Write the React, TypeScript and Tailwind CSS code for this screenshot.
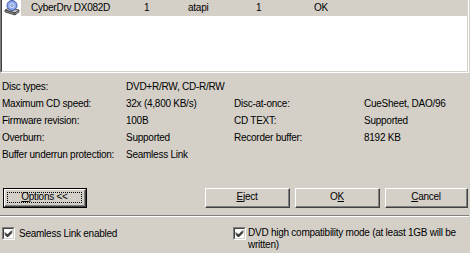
import React from "react";

function DriveIcon() {
  return (
    <svg width="16" height="16" viewBox="0 0 16 16" className="block">
      <path d="M1 10 L5 8 L15 10 L11 13 Z" fill="#c0c0c0" stroke="#404040" strokeWidth="0.8" />
      <path d="M1 10 L11 13 L11 15 L1 12 Z" fill="#808080" stroke="#404040" strokeWidth="0.8" />
      <path d="M11 13 L15 10 L15 12 L11 15 Z" fill="#a0a0a0" stroke="#404040" strokeWidth="0.8" />
      <circle cx="8" cy="5.5" r="5" fill="#8fa8e8" stroke="#3050a0" strokeWidth="0.9" />
      <circle cx="8" cy="5.5" r="2.6" fill="#c8d8ff" />
      <circle cx="8" cy="5.5" r="1" fill="#ffffff" stroke="#3050a0" strokeWidth="0.6" />
    </svg>
  );
}

function Check() {
  return (
    <span className="block shrink-0 w-[13px] h-[13px] border-t border-l border-[#808080] border-r border-b border-r-white border-b-white">
      <span className="block w-[11px] h-[11px] border-t border-l border-[#404040] border-r border-b border-r-[#d4d0c8] border-b-[#d4d0c8] bg-white">
        <svg width="9" height="9" viewBox="0 0 9 9" className="block">
          <path d="M1 3.5 L3.5 6 L8 1.5 M1 4.5 L3.5 7 L8 2.5 M1 5.5 L3.5 8 L8 3.5" stroke="#000" strokeWidth="1" fill="none" />
        </svg>
      </span>
    </span>
  );
}

function Btn({ children, focus = false, w = "w-[85px]" }: { children: React.ReactNode; focus?: boolean; w?: string }) {
  if (focus) {
    return (
      <div className={`${w} h-[20px] border border-black`}>
        <div className="w-full h-full border-t border-l border-white border-r border-b border-r-[#404040] border-b-[#404040]">
          <div className="w-full h-full border-r border-b border-[#808080] p-[2px]">
            <div className="w-full h-full border border-dotted border-black flex items-center justify-center">
              {children}
            </div>
          </div>
        </div>
      </div>
    );
  }
  return (
    <div className={`${w} h-[20px] border-t border-l border-white border-r border-b border-r-[#404040] border-b-[#404040]`}>
      <div className="w-full h-full border-r border-b border-[#808080] flex items-center justify-center">
        {children}
      </div>
    </div>
  );
}

const rowsLeft: [string, string][] = [
  ["Disc types:", "DVD+R/RW, CD-R/RW"],
  ["Maximum CD speed:", "32x (4,800 KB/s)"],
  ["Firmware revision:", "100B"],
  ["Overburn:", "Supported"],
  ["Buffer underrun protection:", "Seamless Link"],
];
const rowsRight: [string, string][] = [
  ["", ""],
  ["Disc-at-once:", "CueSheet, DAO/96"],
  ["CD TEXT:", "Supported"],
  ["Recorder buffer:", "8192 KB"],
  ["", ""],
];

export default function App() {
  return (
    <div className="w-[470px] h-[253px] bg-[#d4d0c8] overflow-hidden font-['Liberation_Sans',sans-serif] text-[10px] tracking-[-0.25px] text-black leading-none whitespace-nowrap">
      {/* list box */}
      <div className="w-[469px] h-[73px] border-l border-r border-b border-l-[#808080] border-r-white border-b-white">
        <div className="w-full h-full border-l border-r border-b border-l-[#404040] border-r-[#d4d0c8] border-b-[#d4d0c8] bg-white">
          <div className="flex h-[16px] items-center">
            <div className="w-[19px] pl-[2px] flex items-center">
              <DriveIcon />
            </div>
            <div className="flex-1 h-full bg-[#d4d0c8] flex items-center">
              <span className="w-[123px] pl-[10px]">CyberDrv DX082D</span>
              <span className="w-[44px]">1</span>
              <span className="w-[68px]">atapi</span>
              <span className="w-[58px]">1</span>
              <span>OK</span>
            </div>
          </div>
        </div>
      </div>

      {/* info */}
      <div className="mt-[6px] flex flex-col">
        {rowsLeft.map((r, i) => (
          <div key={i} className="flex h-[16.8px] items-center">
            <span className="w-[126px] pl-[2px]">{r[0]}</span>
            <span className="w-[108px]">{r[1]}</span>
            <span className="w-[130px]">{rowsRight[i][0]}</span>
            <span>{rowsRight[i][1]}</span>
          </div>
        ))}
      </div>

      {/* buttons */}
      <div className="mt-[25px] flex items-center pl-[3px] pr-[2px]">
        <Btn focus w="w-[84px]">
          <span><u>O</u>ptions &lt;&lt;</span>
        </Btn>
        <div className="flex-1" />
        <div className="flex gap-[5px]">
          <Btn w="w-[85px]"><span><u>E</u>ject</span></Btn>
          <Btn w="w-[85px]"><span>O<u>K</u></span></Btn>
          <Btn w="w-[83px]"><span><u>C</u>ancel</span></Btn>
        </div>
      </div>

      {/* separator */}
      <div className="mt-[7px] w-[469px] h-[2px] border-t border-b border-t-[#808080] border-b-white" />

      {/* checkboxes */}
      <div className="mt-[10px] flex">
        <div className="w-[233px] flex items-start pl-[2px]">
          <Check />
          <span className="ml-[4px] leading-[13px]">Seamless Link enabled</span>
        </div>
        <div className="flex-1 flex items-start">
          <Check />
          <span className="ml-[2px] leading-[12px] w-[215px] whitespace-normal">DVD high compatibility mode (at least 1GB will be written)</span>
        </div>
      </div>
    </div>
  );
}
